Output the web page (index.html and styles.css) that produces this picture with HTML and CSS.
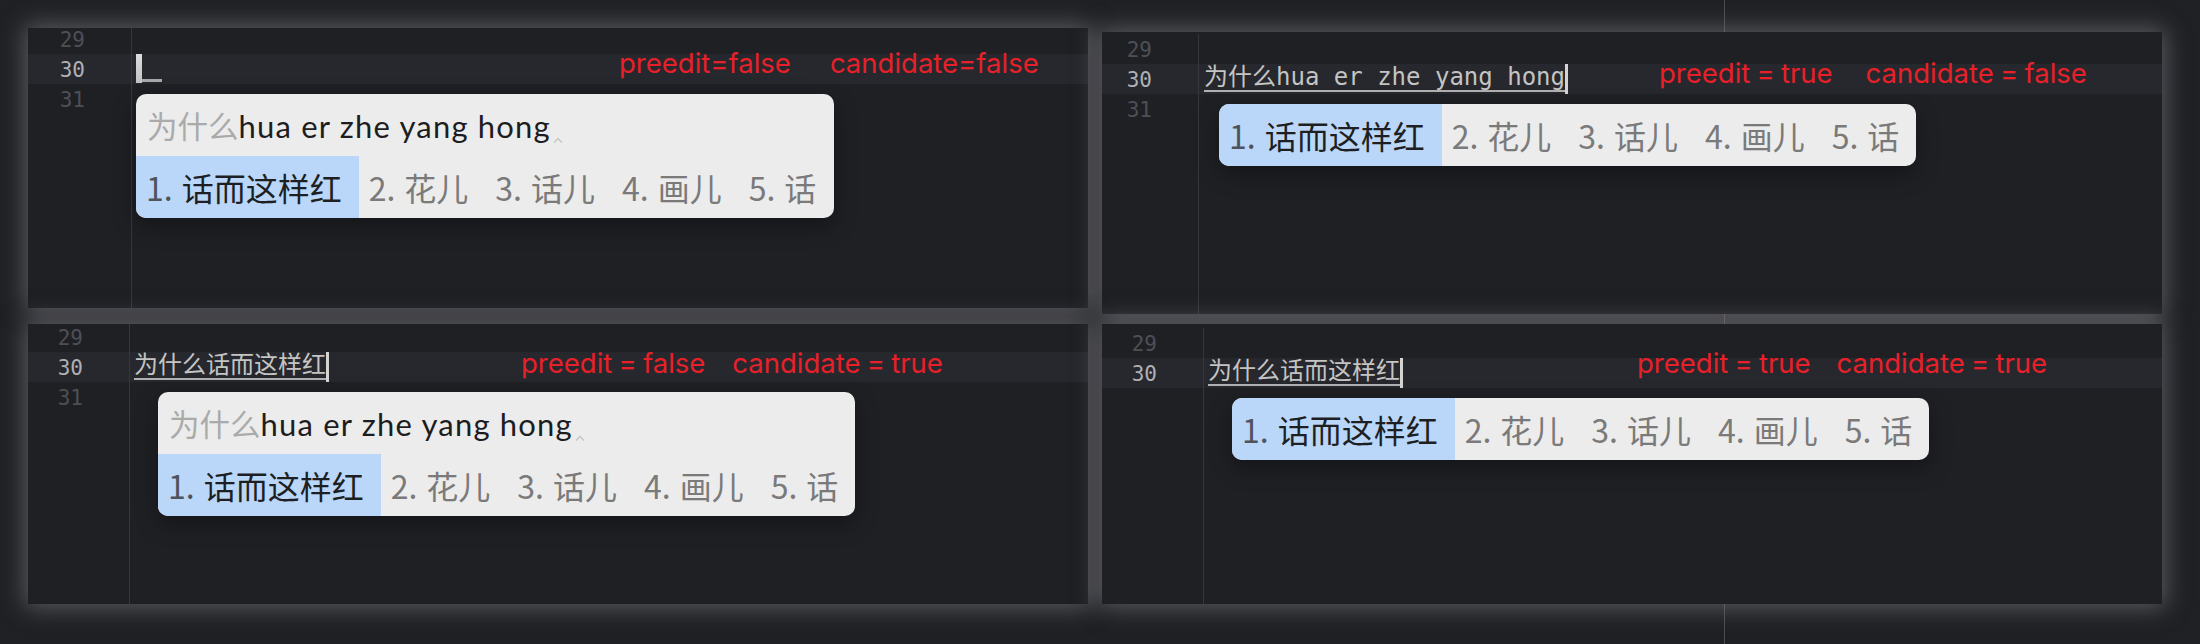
FILE: index.html
```html
<!DOCTYPE html>
<html lang="zh">
<head>
<meta charset="utf-8">
<title>IME preedit / candidate states</title>
<link rel="stylesheet" href="styles.css">
</head>
<body>
<main class="board">

  <section class="ed p1">
    <div class="row"><div class="num">29</div><div class="code"></div></div>
    <div class="row cur"><div class="num">30</div><div class="code"><span class="pending"><span class="bar"></span><span class="uline"></span></span></div></div>
    <div class="row"><div class="num">31</div><div class="code"></div></div>
    <div class="row fill"><div class="num"></div><div class="code"></div></div>
    <div class="note"><span>preedit=false</span><span>candidate=false</span></div>
    <div class="popup">
      <div class="pre"><span class="done">为什么</span><span class="raw">hua er zhe yang hong</span><svg class="mark" width="10" height="6" viewBox="0 0 10 6"><polyline points="1,5.5 5,1.5 9,5.5" fill="none" stroke="#c4c4c4" stroke-width="1.4"/></svg></div>
      <div class="cands">
        <span class="cand sel"><span class="idx">1.</span>话而这样红</span>
        <span class="cand"><span class="idx">2.</span>花儿</span>
        <span class="cand"><span class="idx">3.</span>话儿</span>
        <span class="cand"><span class="idx">4.</span>画儿</span>
        <span class="cand"><span class="idx">5.</span>话</span>
      </div>
    </div>
  </section>

  <section class="ed p2">
    <div class="row"><div class="num">29</div><div class="code"></div></div>
    <div class="row cur"><div class="num">30</div><div class="code"><span class="marked">为什么hua er zhe yang hong</span><span class="caret"></span></div></div>
    <div class="row"><div class="num">31</div><div class="code"></div></div>
    <div class="row fill"><div class="num"></div><div class="code"></div></div>
    <div class="note"><span>preedit = true</span><span>candidate = false</span></div>
    <div class="popup">
      <div class="cands">
        <span class="cand sel"><span class="idx">1.</span>话而这样红</span>
        <span class="cand"><span class="idx">2.</span>花儿</span>
        <span class="cand"><span class="idx">3.</span>话儿</span>
        <span class="cand"><span class="idx">4.</span>画儿</span>
        <span class="cand"><span class="idx">5.</span>话</span>
      </div>
    </div>
  </section>

  <section class="ed p3">
    <div class="row"><div class="num">29</div><div class="code"></div></div>
    <div class="row cur"><div class="num">30</div><div class="code"><span class="marked">为什么话而这样红</span><span class="caret"></span></div></div>
    <div class="row"><div class="num">31</div><div class="code"></div></div>
    <div class="row fill"><div class="num"></div><div class="code"></div></div>
    <div class="note"><span>preedit = false</span><span>candidate = true</span></div>
    <div class="popup">
      <div class="pre"><span class="done">为什么</span><span class="raw">hua er zhe yang hong</span><svg class="mark" width="10" height="6" viewBox="0 0 10 6"><polyline points="1,5.5 5,1.5 9,5.5" fill="none" stroke="#c4c4c4" stroke-width="1.4"/></svg></div>
      <div class="cands">
        <span class="cand sel"><span class="idx">1.</span>话而这样红</span>
        <span class="cand"><span class="idx">2.</span>花儿</span>
        <span class="cand"><span class="idx">3.</span>话儿</span>
        <span class="cand"><span class="idx">4.</span>画儿</span>
        <span class="cand"><span class="idx">5.</span>话</span>
      </div>
    </div>
  </section>

  <section class="ed p4">
    <div class="row"><div class="num">29</div><div class="code"></div></div>
    <div class="row cur"><div class="num">30</div><div class="code"><span class="marked">为什么话而这样红</span><span class="caret"></span></div></div>
    <div class="row fill"><div class="num"></div><div class="code"></div></div>
    <div class="note"><span>preedit = true</span><span>candidate = true</span></div>
    <div class="popup">
      <div class="cands">
        <span class="cand sel"><span class="idx">1.</span>话而这样红</span>
        <span class="cand"><span class="idx">2.</span>花儿</span>
        <span class="cand"><span class="idx">3.</span>话儿</span>
        <span class="cand"><span class="idx">4.</span>画儿</span>
        <span class="cand"><span class="idx">5.</span>话</span>
      </div>
    </div>
  </section>

</main>
</body>
</html>
```

FILE: styles.css
```css
html, body {
  margin: 0;
  padding: 0;
}

body {
  width: 2200px;
  height: 644px;
  overflow: hidden;
  background:
    linear-gradient(to right, transparent 1724px, #4c4d51 1724px, #4c4d51 1725px, transparent 1725px),
    #202125;
  font-family: "DejaVu Sans Mono", "Noto Sans CJK SC", monospace;
}

.board {
  display: grid;
  grid-template-columns: 1060px 1060px;
  column-gap: 14px;
  row-gap: 10px;
  padding: 28px 0 0 28px;
  align-items: start;
}

.ed {
  position: relative;
  display: flex;
  flex-direction: column;
  height: 280px;
  overflow: hidden;
  background: #1f2024;
  box-shadow: 0 0 22px 3px rgba(128, 128, 134, 0.62);
}

.p2 {
  margin-top: 4px;
  height: 282px;
}

.row {
  display: flex;
  height: 30px;
  flex: 0 0 30px;
}

.row.cur {
  background: #27282d;
}

.row.fill {
  flex: 1 1 auto;
}

.num {
  box-sizing: border-box;
  flex: 0 0 auto;
  width: 104px;
  padding: 3px 46px 0 0;
  border-right: 1px solid #36373c;
  text-align: right;
  font-family: "DejaVu Sans Mono", monospace;
  font-size: 21px;
  line-height: 27px;
  color: #4d4f56;
}

.row.cur .num {
  color: #aeb0b6;
}

.p2 .num { width: 97px; }
.p3 .num,
.p4 .num { width: 102px; }

.p1 .row:first-child { margin-top: -4px; }
.p2 .row:first-child { margin-top: 2px; }
.p3 .row:first-child { margin-top: -2px; }
.p4 .row:first-child { margin-top: 4px; }

.code {
  flex: 1 1 auto;
  display: flex;
  align-items: flex-start;
  padding-left: 4px;
  font-family: "DejaVu Sans Mono", "Noto Sans CJK SC", monospace;
  font-size: 24px;
  color: #c4c4c4;
  white-space: pre;
}

.p2 .code { padding-left: 5px; }

.marked {
  display: inline-block;
  height: 26px;
  line-height: 26px;
  border-bottom: 2px solid #b0b0b0;
}

.caret {
  display: inline-block;
  width: 3px;
  height: 30px;
  background: #d4d4d4;
}

.pending {
  display: flex;
  align-items: flex-start;
}

.pending .bar {
  width: 6px;
  height: 29px;
  background: linear-gradient(#dedede, #c2c2c2);
}

.pending .uline {
  width: 20px;
  height: 3px;
  margin-top: 25px;
  background: #a8a8a8;
}

/* red annotations laid over the screenshots */
.note {
  position: absolute;
  display: flex;
  font-family: "Inter", "Liberation Sans", sans-serif;
  font-size: 27.5px;
  word-spacing: -1.5px;
  line-height: 30px;
  color: #e8202a;
  white-space: pre;
}

.p1 .note { left: 591px; top: 20px; gap: 39px; }
.p2 .note { left: 557px; top: 26px; gap: 33px; }
.p3 .note { left: 493px; top: 24px; gap: 27px; }
.p4 .note { left: 535px; top: 24px; gap: 26px; }

/* candidate window overlay */
.popup {
  position: absolute;
  width: 697px;
  background: #ececec;
  border-radius: 10px;
  overflow: hidden;
  box-shadow: 0 8px 22px rgba(0, 0, 0, 0.35);
}

.p1 .popup { left: 108px; top: 66px; width: 698px; }
.p2 .popup { left: 117px; top: 72px; }
.p3 .popup { left: 130px; top: 68px; }
.p4 .popup { left: 130px; top: 74px; }

.pre {
  height: 62px;
  padding-left: 11px;
  line-height: 62px;
  font-size: 31px;
  white-space: pre;
  overflow: hidden;
}

.pre .done {
  font-family: "Noto Sans CJK SC", sans-serif;
  font-size: 30.5px;
  color: #aaaaaa;
}

.pre .raw {
  font-family: "Lato", "Noto Sans", sans-serif;
  font-size: 31px;
  letter-spacing: 1.2px;
  color: #1d1d1f;
}

.pre .mark {
  margin-left: 2px;
  vertical-align: -5px;
}

.cands {
  display: flex;
  height: 62px;
}

.cand {
  display: flex;
  align-items: center;
  padding: 0 17px 0 10px;
  font-family: "Noto Sans CJK SC", sans-serif;
  font-size: 32px;
  color: #7a7a7a;
  white-space: pre;
}

.cand .idx {
  margin-right: 9px;
}

.cand.sel {
  background: #bad7fa;
  color: #1e1f22;
}

.cand.sel .idx {
  color: #4e535c;
}
```
